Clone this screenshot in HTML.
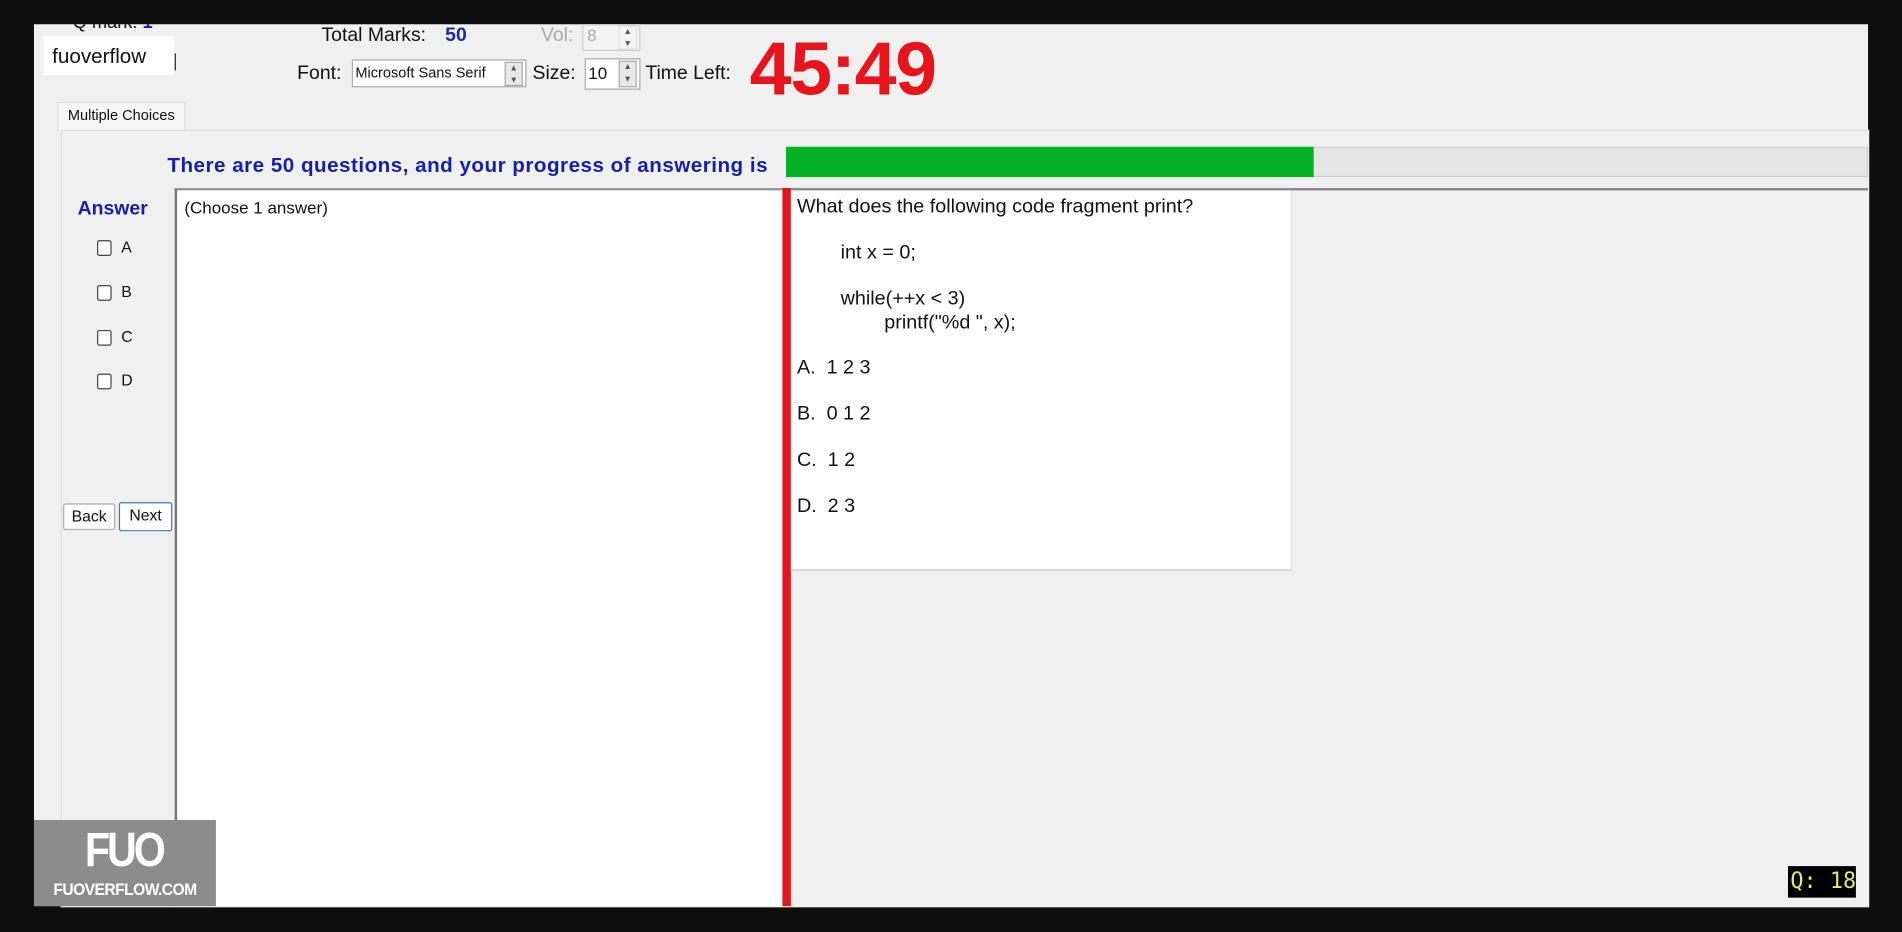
<!DOCTYPE html>
<html><head><meta charset="utf-8">
<style>
html,body{margin:0;padding:0;background:#0e0e0e;overflow:hidden;width:1902px;height:932px}
#w{position:absolute;left:0;top:0;width:1568px;height:768px;transform:scale(1.21301);transform-origin:0 0;font-family:"Liberation Sans",Arial,sans-serif;color:#111}
.a{position:absolute;white-space:nowrap}
.box{position:absolute;background:#fff;border:1px solid #a8a8a8;box-sizing:border-box}
.spin{position:absolute;width:15px;background:#e8e8e8;border:1px solid #aaa;box-sizing:border-box;font-size:7px;text-align:center;line-height:10px;color:#555}
.cb{position:absolute;width:12px;height:13px;border:1px solid #444;border-radius:2px;background:#fff;box-sizing:border-box}
.btn{position:absolute;height:22px;background:#fdfdfd;border:1px solid #adadad;border-radius:2px;box-sizing:border-box;font-size:13px;text-align:center;line-height:20px}
.q{font-size:16.3px;color:#111}
</style></head><body><div id="w">
<div class="a" style="left:28px;top:20px;width:1512px;height:727px;background:#f0f0f0;overflow:hidden">
</div>
<div class="a" style="left:60px;top:20px;font-size:15px;height:10px;overflow:hidden"><span style="position:relative;top:-10px">Q mark: <b style="color:#1a1aa8">1</b></span></div>
<div class="a" style="left:36px;top:30px;width:108px;height:32px;background:#fff"></div>
<div class="a" style="left:43px;top:37px;font-size:17px">fuoverflow</div>
<div class="a" style="left:144px;top:44px;width:1px;height:14px;background:#222"></div>

<div class="a" style="left:265px;top:21px;font-size:16px">Total Marks:</div>
<div class="a" style="left:367px;top:21px;font-size:16px;color:#1a2aa0;font-weight:bold">50</div>
<div class="a" style="left:446px;top:21px;font-size:16px;color:#aaa">Vol:</div>
<div class="box" style="left:480px;top:20px;width:48px;height:22px;background:#f4f4f4;border-color:#ccc"></div>
<div class="a" style="left:484px;top:21px;font-size:14px;color:#aaa">8</div>
<div class="spin" style="left:510px;top:21px;height:20px;background:#f4f4f4;border-color:#ddd">▲<br>▼</div>

<div class="a" style="left:245px;top:52px;font-size:16px">Font:</div>
<div class="box" style="left:290px;top:49px;width:144px;height:23px"></div>
<div class="a" style="left:293px;top:53px;font-size:12px">Microsoft Sans Serif</div>
<div class="spin" style="left:416px;top:51px;height:20px">▲<br>▼</div>
<div class="a" style="left:439px;top:52px;font-size:16px">Size:</div>
<div class="box" style="left:482px;top:48px;width:46px;height:26px"></div>
<div class="a" style="left:485px;top:52px;font-size:14px">10</div>
<div class="spin" style="left:510px;top:50px;height:22px">▲<br>▼</div>
<div class="a" style="left:532px;top:52px;font-size:16px">Time Left:</div>
<div class="a" style="left:618px;top:22px;font-size:62px;color:#e8141b;font-weight:bold;letter-spacing:-1px">45:49</div>

<div class="a" style="left:47px;top:84px;width:104px;height:24px;background:#f7f7f7;border:1px solid #ddd;border-bottom:none"></div>
<div class="a" style="left:56px;top:88px;font-size:12px">Multiple Choices</div>
<div class="a" style="left:50px;top:107px;width:1490px;height:640px;border-top:1px solid #ddd;border-left:1px solid #ddd;background:#f0f0f0"></div>

<div class="a" style="left:138px;top:127px;font-size:17px;letter-spacing:0.4px;color:#1620a8;font-weight:bold">There are 50 questions, and your progress of answering is</div>
<div class="a" style="left:648px;top:121px;width:892px;height:25px;background:#e6e6e6;border:1px solid #cfcfcf;box-sizing:border-box"></div>
<div class="a" style="left:648px;top:121px;width:435px;height:25px;background:#06b025"></div>

<div class="a" style="left:64px;top:164px;font-size:16px;color:#1620a8;font-weight:bold">Answer</div>
<div class="cb" style="left:80px;top:198px"></div><div class="a" style="left:100px;top:196px;font-size:13px">A</div>
<div class="cb" style="left:80px;top:235px"></div><div class="a" style="left:100px;top:233px;font-size:13px">B</div>
<div class="cb" style="left:80px;top:272px"></div><div class="a" style="left:100px;top:270px;font-size:13px">C</div>
<div class="cb" style="left:80px;top:308px"></div><div class="a" style="left:100px;top:306px;font-size:13px">D</div>
<div class="btn" style="left:52px;top:415px;width:43px">Back</div>
<div class="btn" style="left:98px;top:414px;width:44px;height:24px;border:1px solid #3c7fb1">Next</div>

<div class="a" style="left:144px;top:155px;width:501px;height:592px;background:#fff;border-left:2px solid #777;border-top:2px solid #999;box-sizing:border-box"></div>
<div class="a" style="left:152px;top:163px;font-size:14px">(Choose 1 answer)</div>
<div class="a" style="left:645px;top:155px;width:7px;height:592px;background:#e0181d"></div>
<div class="a" style="left:652px;top:155px;width:888px;height:2px;background:#8a8a8a"></div>
<div class="a" style="left:652px;top:157px;width:413px;height:314px;background:#fff;border-right:1px solid #ddd;border-bottom:2px solid #ddd;box-sizing:border-box"></div>
<div class="a q" style="left:657px;top:161px">What does the following code fragment print?</div>
<div class="a q" style="left:693px;top:199px">int x = 0;</div>
<div class="a q" style="left:693px;top:237px">while(++x &lt; 3)</div>
<div class="a q" style="left:729px;top:257px">printf("%d ", x);</div>
<div class="a q" style="left:657px;top:294px">A.&nbsp; 1 2 3</div>
<div class="a q" style="left:657px;top:332px">B.&nbsp; 0 1 2</div>
<div class="a q" style="left:657px;top:370px">C.&nbsp; 1 2</div>
<div class="a q" style="left:657px;top:408px">D.&nbsp; 2 3</div>

<div class="a" style="left:28px;top:676px;width:150px;height:71px;background:#8c8c8c"></div>
<div class="a" style="left:70px;top:679px;width:68px;font-size:40px;line-height:44px;color:#fff;font-weight:bold;letter-spacing:-3px;transform:scaleX(0.85);transform-origin:0 0">FUO</div>
<div class="a" style="left:44px;top:725px;font-size:14px;color:#fff;font-weight:bold;letter-spacing:-0.5px;transform:scaleX(0.92);transform-origin:0 0">FUOVERFLOW.COM</div>
<div class="a" style="left:1474px;top:714px;width:56px;height:26px;background:#000"></div>
<div class="a" style="left:1476px;top:716px;font-size:18px;color:#e8e870;font-family:'DejaVu Sans Mono',monospace">Q: 18</div>
</div></body></html>
